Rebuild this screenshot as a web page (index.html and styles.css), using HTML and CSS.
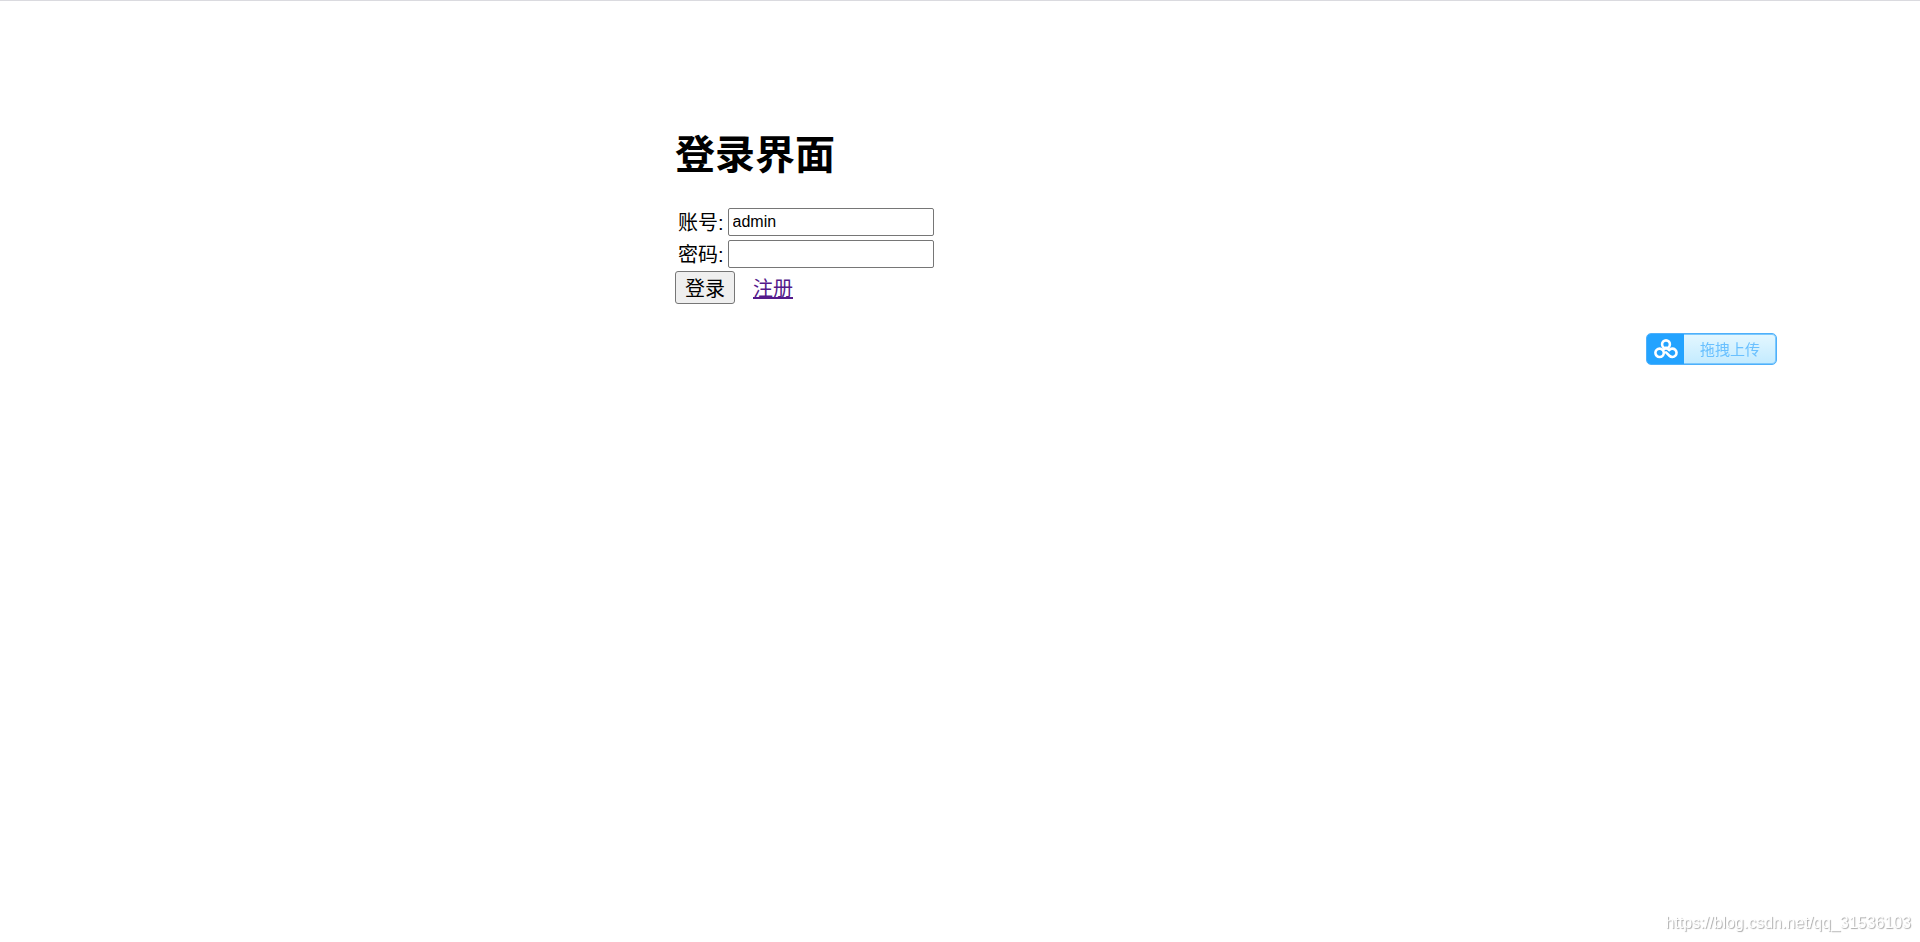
FILE: index.html
```
<!DOCTYPE html>
<html lang="zh-CN">
<head>
    <meta charset="UTF-8">
    <meta name="viewport" content="width=device-width, initial-scale=1.0">
    <title>登录界面</title>
    <link rel="stylesheet" href="styles.css">
</head>
<body>
    <div class="login">
        <h1>登录界面</h1>
        <form>
            <table>
                <tr>
                    <td><label for="username">账号:</label></td>
                    <td><input type="text" id="username" name="username" value="admin"></td>
                </tr>
                <tr>
                    <td><label for="password">密码:</label></td>
                    <td><input type="password" id="password" name="password"></td>
                </tr>
            </table>
            <div class="actions">
                <button type="submit">登录</button>
                <a href="#register">注册</a>
            </div>
        </form>
    </div>

    <!-- floating upload button -->
    <button type="button" class="upload">
        <span class="upload-icon">
            <svg width="24" height="20" viewBox="0 0 24 20" fill="none" stroke="#fff" stroke-width="2.6" stroke-linecap="round">
                <circle cx="12" cy="5.3" r="3.9"/>
                <circle cx="5.6" cy="13.8" r="4.2"/>
                <path d="M8.8 11 L12 8.8 L15.2 11"/>
                <path d="M15.2 11 A4.2 4.2 0 1 1 15.4 16.8 L12 13.4"/>
            </svg>
        </span>
        <span class="upload-text">拖拽上传</span>
    </button>

    <div class="watermark">https://blog.csdn.net/qq_31536103</div>
</body>
</html>
```

FILE: styles.css
```
body {
    margin: 0;
    border-top: 1px solid #dadadf;
    font-family: "Liberation Sans", "Noto Sans CJK SC", sans-serif;
    font-size: 20px;
    line-height: 26px;
    color: #000;
    background-color: #fff;
}
.login {
    width: 570px;
    margin: 0 auto;
    padding-top: 127px;
}
h1 {
    margin: 0 0 23px;
    font-size: 40px;
    line-height: 54px;
}
table {
    border-spacing: 2px;
}
td {
    padding: 1px;
}
td label {
    display: block;
    padding-top: 2px;
}
input {
    display: block;
    box-sizing: border-box;
    width: 206px;
    height: 28px;
    padding: 1px 4px;
    border: 1px solid #767676;
    border-radius: 2px;
    font-family: "Liberation Sans", sans-serif;
    font-size: 16px;
    color: #000;
}
.actions {
    display: flex;
    align-items: center;
    gap: 18px;
}
.actions button {
    width: 60px;
    height: 33px;
    padding: 0;
    border: 1px solid #767676;
    border-radius: 3px;
    background-color: #efefef;
    font-family: inherit;
    font-size: 20px;
    color: #000;
}
.actions a {
    padding-top: 2px;
    color: #551a8b;
}
.upload {
    position: fixed;
    top: 333px;
    right: 143px;
    display: flex;
    width: 131px;
    height: 32px;
    padding: 0;
    overflow: hidden;
    border: 1px solid #4eb0fb;
    border-radius: 5px;
    background: linear-gradient(#e4f7ff, #c3ebff);
    box-shadow: inset 0 0 0 1px #7cc8fd;
    font-family: "Noto Sans CJK SC", sans-serif;
    font-size: 15px;
    color: #69c0ff;
}
.upload-icon {
    display: flex;
    align-items: center;
    justify-content: center;
    width: 37px;
    height: 100%;
    background-color: #23a3ff;
}
.upload-text {
    flex: 1;
    line-height: 30px;
}
.watermark {
    position: fixed;
    right: 9px;
    bottom: 6px;
    font-size: 16px;
    color: #fff;
    text-shadow: 1px 1px 1px #aaa;
}
```
